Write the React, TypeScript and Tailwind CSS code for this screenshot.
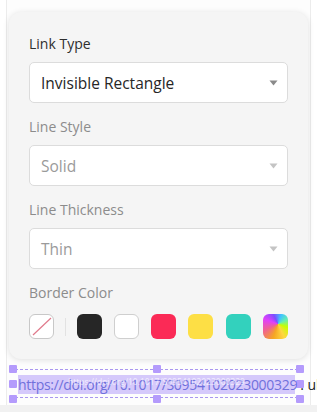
import React from "react"

function Caret({ muted }: { muted?: boolean }) {
  return (
    <svg width="9" height="6" viewBox="0 0 9 6" className="shrink-0">
      <path d="M0.5 0.5 L8.5 0.5 L4.5 5.5 Z" fill={muted ? "#c4c4c4" : "#8a8a8a"} />
    </svg>
  )
}

function Field({ label, value, muted }: { label: string; value: string; muted?: boolean }) {
  return (
    <div className="flex flex-col">
      <div className={`h-5 mb-2 text-[14px] leading-5 ${muted ? "text-[#8c8c8c]" : "text-[#2e2e2e]"}`}>{label}</div>
      <div className="h-[41px] mb-[14px] flex items-center justify-between pl-[11px] pr-[9px] bg-white border border-[#dcdcdc] rounded-[5px]">
        <span className={`pt-[3px] text-[15.5px] ${muted ? "text-[#9a9a9a]" : "text-[#262626]"}`}>{value}</span>
        <Caret muted={muted} />
      </div>
    </div>
  )
}

function Swatch({ className }: { className: string }) {
  return <div className={`w-[25px] h-[25px] rounded-[6px] ${className}`} />
}

function Handle() {
  return <div className="w-2 h-2 bg-[#b49bfc] rounded-[1px]" />
}

export default function App() {
  const url = "https://doi.org/10.1017/S0954102023000329"
  return (
    <div className="w-[317px] h-[412px] bg-white flex flex-col overflow-hidden" style={{ fontFamily: '"Open Sans", "Noto Sans", sans-serif' }}>
      <div className="mx-[6px] h-[405px] border-x border-[#ececec] bg-[#fdfdfd] flex flex-col">
        <div className="mt-3 ml-[2px] mr-[2px] bg-[#f5f5f5] rounded-[12px] shadow-[0_1px_6px_rgba(0,0,0,0.12)] px-5 pt-[22px] pb-5">
          <Field label="Link Type" value="Invisible Rectangle" />
          <Field label="Line Style" value="Solid" muted />
          <Field label="Line Thickness" value="Thin" muted />
          <div className="h-5 mb-[11px] text-[14px] leading-5 text-[#8c8c8c]">Border Color</div>
          <div className="flex items-center">
            <div className="relative w-[26px] h-[25px] rounded-[6px] bg-white border border-[#c8c8c8] overflow-hidden">
              <svg width="26" height="25" viewBox="0 0 26 25" className="absolute -left-px -top-px">
                <line x1="4" y1="21" x2="22" y2="4" stroke="#e07a8c" strokeWidth="1.2" />
              </svg>
            </div>
            <div className="w-px h-[18px] bg-[#e2e2e2] ml-[11px] mr-[11px]" />
            <div className="flex gap-[12.3px]">
              <Swatch className="bg-[#262626]" />
              <Swatch className="bg-white border border-[#cfcfcf]" />
              <Swatch className="bg-[#fb2a56]" />
              <Swatch className="bg-[#fddf45]" />
              <Swatch className="bg-[#33d1bd]" />
              <Swatch className="bg-[conic-gradient(from_200deg_at_60%_40%,#f5a623,#f06292,#e040fb,#7c4dff,#40c4ff,#69f0ae,#c6ff00,#ffd740,#f5a623)]" />
            </div>
          </div>
        </div>
        <div className="relative mt-[6px] h-[38px]">
          <div className="absolute left-[2px] top-0 w-[295px] h-[38px]">
            <div className="absolute left-[6px] right-[6px] top-[4px] border-t border-dashed border-[#a996f0]" />
            <div className="absolute left-[6px] right-[6px] bottom-[5px] border-t border-dashed border-[#a996f0]" />
            <div className="absolute left-[9px] top-[10px] h-[19px] w-[277px] bg-[#d5c9fb]" />
            <div className="absolute left-0 top-0"><Handle /></div>
            <div className="absolute left-[144px] top-0"><Handle /></div>
            <div className="absolute right-0 top-0"><Handle /></div>
            <div className="absolute left-0 top-[15px]"><Handle /></div>
            <div className="absolute right-0 top-[15px]"><Handle /></div>
            <div className="absolute left-0 bottom-0"><Handle /></div>
            <div className="absolute left-[144px] bottom-0"><Handle /></div>
            <div className="absolute right-0 bottom-0"><Handle /></div>
          </div>
          <div className="absolute left-[11px] top-[9px] flex items-baseline whitespace-nowrap text-[14px] leading-[22px]">
            <span className="text-[#7070dc] tracking-[-0.3px]">{url}</span>
            <span className="text-[#1e1e1e] ml-[3px]">. ub</span>
          </div>
          <div className="absolute left-[61px] top-[11px] text-[8.5px] leading-3 text-white/70 whitespace-nowrap">{url}</div>
        </div>
      </div>
      <div className="flex-1 bg-[#f1f1f1]" />
    </div>
  )
}
